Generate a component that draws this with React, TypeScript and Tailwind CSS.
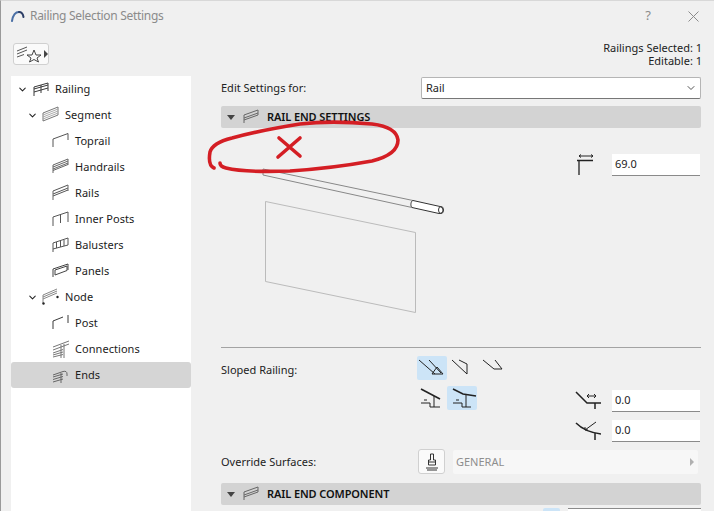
import { ChevronDown } from 'lucide-react';
import type { ReactNode } from 'react';

const Ico = ({ children, w = 18, h = 18 }: { children: ReactNode; w?: number; h?: number }) => (
  <svg width={w} height={h} viewBox={`0 0 ${w} ${h}`} fill="none" stroke="#3a3a3a" strokeWidth="1" className="shrink-0">
    {children}
  </svg>
);

const RailingIcon = () => (
  <Ico>
    <path d="M2 16V7L16 3V11M9 5V13M2 9L16 5M2 12L16 8" />
  </Ico>
);
const SegmentIcon = () => (
  <Ico>
    <path d="M1 7L16 1V9L1 15Z" stroke="#777" />
    <path d="M1 9L16 3M1 11L16 5M1 13L16 7" stroke="#aaa" />
  </Ico>
);
const ToprailIcon = () => (
  <Ico>
    <path d="M1 15V7L16 1.500V8" stroke="#555" />
  </Ico>
);
const HandrailsIcon = () => (
  <Ico>
    <path d="M1 7L16 1M1 9L16 3M1 11L16 5M1 12.500L16 6.500" stroke="#666" />
    <path d="M1 7V15M16 1V7" stroke="#666" />
  </Ico>
);
const RailsIcon = () => (
  <Ico>
    <path d="M1 7L16 1M1 10L16 4M1 12L16 6" stroke="#555" />
    <path d="M1 7V16M16 1V7" stroke="#666" />
  </Ico>
);
const InnerPostsIcon = () => (
  <Ico>
    <path d="M1 16V7L16 2V12M8.500 5V13" stroke="#555" />
  </Ico>
);
const BalustersIcon = () => (
  <Ico>
    <path d="M1 16V7L16 2V9M1 13L16 9M4.500 6V12M8.500 5V11M12 4V10" stroke="#555" />
  </Ico>
);
const PanelsIcon = () => (
  <Ico>
    <path d="M1 15V7L16 2V8M3 13V8L15 4V8.500Z" stroke="#444" />
  </Ico>
);
const NodeIcon = () => (
  <Ico>
    <path d="M1 7L15 1M1 9L15 3M1 11L15 5M1 7V15" stroke="#888" />
    <circle cx="1.500" cy="15.500" r="1.200" fill="#222" stroke="none" />
    <circle cx="15.500" cy="9" r="1.200" fill="#222" stroke="none" />
  </Ico>
);
const PostIcon = () => (
  <Ico>
    <path d="M1 15V7L11 3M16 1V9" />
  </Ico>
);
const ConnectionsIcon = () => (
  <Ico>
    <path d="M1 7L17 1M1 10L17 4M1 13L11 9.500M1 15L11 12M1 17L11 14.500M9 5V18M12 4V18" stroke="#777" />
  </Ico>
);
const EndsIcon = () => (
  <Ico>
    <path d="M1 9L11 5.500Q15 4.500 15 8V10M1 11L11 8M1 13.500L11 10.500M1 16L11 13M9 7V17" stroke="#666" />
  </Ico>
);

const rows = [
  { label: 'Railing', depth: 0, open: true, icon: <RailingIcon /> },
  { label: 'Segment', depth: 1, open: true, icon: <SegmentIcon /> },
  { label: 'Toprail', depth: 2, icon: <ToprailIcon /> },
  { label: 'Handrails', depth: 2, icon: <HandrailsIcon /> },
  { label: 'Rails', depth: 2, icon: <RailsIcon /> },
  { label: 'Inner Posts', depth: 2, icon: <InnerPostsIcon /> },
  { label: 'Balusters', depth: 2, icon: <BalustersIcon /> },
  { label: 'Panels', depth: 2, icon: <PanelsIcon /> },
  { label: 'Node', depth: 1, open: true, icon: <NodeIcon /> },
  { label: 'Post', depth: 2, icon: <PostIcon /> },
  { label: 'Connections', depth: 2, icon: <ConnectionsIcon /> },
  { label: 'Ends', depth: 2, selected: true, icon: <EndsIcon /> },
];

const indent = ['pl-[6px]', 'pl-[16px]', 'pl-[26px]'];

function TreeRow({ row }: { row: (typeof rows)[number] }) {
  return (
    <div className={`flex h-[26px] items-center ${indent[row.depth]} ${row.selected ? 'rounded-[3px] bg-[#d5d5d5]' : ''}`}>
      <span className="flex w-[15px] shrink-0 justify-start">
        {row.open && <ChevronDown size={11} strokeWidth={2.2} className="text-[#222]" />}
      </span>
      <span className="flex w-[23px] shrink-0">{row.icon}</span>
      <span className="tracking-[0.05px] text-[#1c1c1c]">{row.label}</span>
    </div>
  );
}

const SectionBar = ({ title }: { title: string }) => (
  <div className="flex h-[22px] items-center rounded-[2px] bg-[#d3d3d3] pl-[6px]">
    <span className="h-0 w-0 border-x-[4px] border-t-[5px] border-x-transparent border-t-[#444]" />
    <span className="ml-[8px] flex w-[24px]">
      <svg width="18" height="16" viewBox="0 0 18 16" fill="none" stroke="#666">
        <path d="M1 6L15 1M1 9L15 4M1 11L15 6M1 6V14M15 1V6" />
      </svg>
    </span>
    <span className="text-[11px] font-semibold tracking-[-0.1px] text-[#111]">{title}</span>
  </div>
);

const NumInput = ({ value }: { value: string }) => (
  <div className="flex h-[22px] w-[88px] items-center border-b border-b-[#8a8a8a] bg-white pl-[3px] text-[#222]">{value}</div>
);

const ToolBtn = ({ active, children }: { active?: boolean; children: ReactNode }) => (
  <div className={`h-[24px] w-[30px] rounded-[2px] ${active ? 'bg-[#cce4f7]' : ''}`}>
    <svg width="30" height="24" viewBox="0 0 30 24" fill="none" stroke="#222">
      {children}
    </svg>
  </div>
);

export default function App() {
  return (
    <div
      className="relative flex h-[511px] w-[714px] flex-col overflow-hidden border-l border-t border-l-[#9a9a9a] border-t-[#d8d8d8] bg-[#f0f0f0] text-[11px]"
      style={{ fontFamily: '"Noto Sans", "Open Sans", sans-serif' }}
    >
      {/* title bar */}
      <div className="flex h-[30px] shrink-0 items-center pl-[10px] pr-[15px]">
        <svg width="14" height="12" viewBox="0 0 14 12" fill="none" strokeWidth="2" strokeLinecap="round">
          <path d="M1 11C2 5 5 2 8 2" stroke="#4a6fa5" />
          <path d="M8 2C10.500 2 12 4 12.500 7" stroke="#2c3e66" />
        </svg>
        <span className="ml-[5px] text-[12px] tracking-[-0.3px] text-[#8b8b8b]">Railing Selection Settings</span>
        <span className="ml-auto text-[13px] text-[#8b8b8b]">?</span>
        <svg width="11" height="11" viewBox="0 0 11 11" stroke="#8b8b8b" className="ml-[37px]">
          <path d="M0.500 0.500L10.500 10.500M10.500 0.500L0.500 10.500" />
        </svg>
      </div>

      {/* favorites row */}
      <div className="flex h-[45px] shrink-0 justify-between pl-[12px] pr-[12px] pt-[12px]">
        <div className="flex h-[22px] w-[36px] items-center rounded-[3px] border border-[#d0d0d0] bg-[#fafafa] pl-[1px]">
          <svg width="28" height="18" viewBox="0 0 28 18" fill="none" stroke="#444">
            <path d="M2 6L12 2M2 9L12 5M2 12L9 9.500" stroke="#555" />
            <path d="M19 5L21 10H26L22 13L23.500 17L19 14.500L14.500 17L16 13L12 10H17Z" fill="#fafafa" />
          </svg>
          <span className="ml-[1px] h-0 w-0 border-y-[4px] border-l-[4px] border-y-transparent border-l-[#444]" />
        </div>
        <div className="-mt-[2px] text-right leading-[13px] text-[#222]">
          <div>Railings Selected: 1</div>
          <div>Editable: 1</div>
        </div>
      </div>

      <div className="flex min-h-0 flex-1">
        {/* tree */}
        <div className="ml-[10px] w-[180px] shrink-0 bg-white">
          {rows.map((r) => (
            <TreeRow key={r.label} row={r} />
          ))}
        </div>

        {/* settings */}
        <div className="w-[510px] shrink-0 pl-[30px]">
          <div className="flex h-[30px] items-start justify-between pt-[1px]">
            <span className="leading-[22px] text-[#222]">Edit Settings for:</span>
            <div className="flex h-[22px] w-[280px] items-center justify-between rounded-[2px] border border-[#b5b5b5] border-b-[#777] bg-white pl-[4px] pr-[3px] text-[#222]">
              Rail
              <ChevronDown size={12} className="text-[#555]" />
            </div>
          </div>
          <SectionBar title="RAIL END SETTINGS" />

          <div className="flex h-[220px] border-b border-b-[#a3a3a3]">
            <svg width="340" height="190" viewBox="0 0 340 190" fill="none" className="shrink-0">
              <path d="M42 41V47L191 79.500M42 41L192 72.500" stroke="#888" />
              <path d="M192 72.500L219 78.500C223 79.500 223 86 218 85.500L191 79.500C189 78 190 72.500 192 72.500Z" stroke="#333" fill="#fff" />
              <ellipse cx="220" cy="82" rx="2.500" ry="3.500" stroke="#333" />
              <path d="M44.500 73.500L194.500 104.500V184.500L44.500 153.500Z" stroke="#bbb" />
            </svg>
            <div className="ml-auto mr-[1px] mt-[26px] flex h-[22px] items-center">
              <svg width="20" height="22" viewBox="0 0 20 22" fill="none" stroke="#222" className="mr-[15px]">
                <path d="M2 2H16M2 2L4 0.500M2 2L4 3.500M16 2L14 0.500M16 2L14 3.500" />
                <path d="M0 6.500H16M2 6.500V21" strokeWidth="1.300" />
              </svg>
              <NumInput value="69.0" />
            </div>
          </div>

          {/* sloped railing */}
          <div className="flex h-[101px] pt-[8px]">
            <span className="w-[196px] shrink-0 pt-[6px] text-[#222]">Sloped Railing:</span>
            <div className="flex flex-col gap-[6px]">
              <div className="flex">
                <ToolBtn active>
                  <path d="M2 4L18 18M12 4L24 17M15 18H26L20 11Z" />
                </ToolBtn>
                <ToolBtn>
                  <path d="M5 4L20 18V8L12 4" />
                </ToolBtn>
                <ToolBtn>
                  <path d="M6 4L17 13H25L18 4" />
                </ToolBtn>
              </div>
              <div className="flex">
                <ToolBtn>
                  <path d="M4 3L23 13" strokeWidth="1.600" />
                  <path d="M4 17H13V21H23M17 10V21M7 14H10" />
                </ToolBtn>
                <ToolBtn active>
                  <path d="M6 3L16 8L29 10" strokeWidth="1.600" />
                  <path d="M6 17H15V21H24M19 8V21M9 14H12" />
                </ToolBtn>
              </div>
            </div>
            <div className="ml-auto mr-[1px] flex flex-col gap-[8px] pt-[34px]">
              <div className="flex items-center justify-end gap-[11px]">
                <svg width="26" height="20" viewBox="0 0 26 20" fill="none" stroke="#222">
                  <path d="M1 1L12 12H26M20 12V18" strokeWidth="1.500" />
                  <path d="M12 5H21M12 5L14 3M12 5L14 7M21 5L19 3M21 5L19 7" />
                </svg>
                <NumInput value="0.0" />
              </div>
              <div className="flex items-center justify-end gap-[11px]">
                <svg width="26" height="20" viewBox="0 0 26 20" fill="none" stroke="#222">
                  <path d="M1 2Q10 11 26 13M20 12V19" strokeWidth="1.500" />
                  <path d="M10 9L21 1M10 9L10 6M10 9L13 9" />
                </svg>
                <NumInput value="0.0" />
              </div>
            </div>
          </div>

          {/* override */}
          <div className="flex h-[34px] items-start">
            <span className="w-[197px] shrink-0 pt-[5px] text-[#222]">Override Surfaces:</span>
            <div className="flex h-[25px] w-[27px] items-center justify-center rounded-[3px] border border-[#d0d0d0] bg-[#fafafa]">
              <svg width="14" height="18" viewBox="0 0 14 18" fill="none" stroke="#333">
                <path d="M5.500 1H8.500V7H10.500V12H3.500V7H5.500ZM3.500 9H10.500M1 15H13M2 17H12" />
              </svg>
            </div>
            <div className="ml-[8px] mt-[1px] flex h-[24px] w-[245px] items-center justify-between rounded-[2px] bg-[#f7f7f7] pl-[3px] pr-[4px] text-[#8e8e8e]">
              GENERAL
              <span className="h-0 w-0 border-y-[4px] border-l-[4px] border-y-transparent border-l-[#b0b0b0]" />
            </div>
          </div>

          <SectionBar title="RAIL END COMPONENT" />
          <div className="mt-[3px] flex h-[4px] justify-end">
            <div className="mr-[8px] h-full w-[17px] rounded-t-[2px] bg-[#cce4f7]" />
            <div className="h-full w-[133px] border-t border-t-[#8a8a8a] bg-white" />
          </div>
        </div>
      </div>

      {/* red marker annotation on top of the screenshot */}
      <svg width="714" height="511" viewBox="0 0 714 511" fill="none" stroke="#d41e24" strokeWidth="3.600" strokeLinecap="round" strokeLinejoin="round" className="pointer-events-none absolute left-[-1px] top-[-1px]">
        <path d="M214 168C209 166 209 158 210 152C212 145 220 141 232 138C250 133 275 128 300 124C325 121 350 122 372 124C388 126 397 131 398 140C398 150 388 157 372 161C350 165 320 169 290 171C262 172 238 171 226 168C222 167 220 165 220 163" />
        <path d="M278 157L300 138M279 138L300 156" />
      </svg>
    </div>
  );
}
